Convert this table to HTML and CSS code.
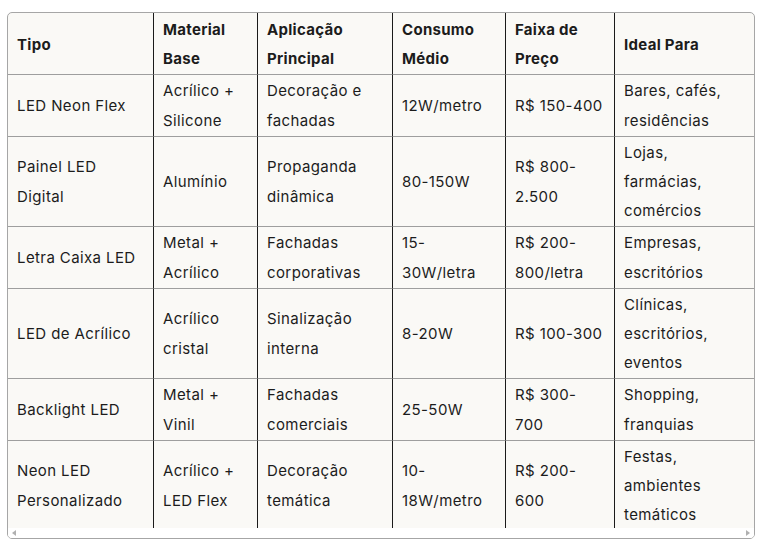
FILE: index.html
```html
<!DOCTYPE html>
<html lang="pt-BR">
<head>
<meta charset="utf-8">
<title>Tabela LED</title>
<link rel="stylesheet" href="styles.css">
</head>
<body>
<div class="frame">
  <div class="scroller">
    <table class="grid">
      <thead>
        <tr>
          <th class="c1">Tipo</th>
          <th class="c2">Material Base</th>
          <th class="c3">Aplicação Principal</th>
          <th class="c4">Consumo Médio</th>
          <th class="c5">Faixa de Preço</th>
          <th class="c6">Ideal Para</th>
        </tr>
      </thead>
      <tbody>
        <tr>
          <td>LED Neon Flex</td>
          <td>Acrílico + Silicone</td>
          <td>Decoração e fachadas</td>
          <td>12W/metro</td>
          <td>R$ 150-400</td>
          <td>Bares, cafés, residências</td>
        </tr>
        <tr>
          <td>Painel LED Digital</td>
          <td>Alumínio</td>
          <td>Propaganda dinâmica</td>
          <td>80-150W</td>
          <td>R$ 800-2.500</td>
          <td>Lojas, farmácias, comércios</td>
        </tr>
        <tr>
          <td>Letra Caixa LED</td>
          <td>Metal + Acrílico</td>
          <td>Fachadas corporativas</td>
          <td>15-30W/letra</td>
          <td>R$ 200-800/letra</td>
          <td>Empresas, escritórios</td>
        </tr>
        <tr>
          <td>LED de Acrílico</td>
          <td>Acrílico cristal</td>
          <td>Sinalização interna</td>
          <td>8-20W</td>
          <td>R$ 100-300</td>
          <td>Clínicas, escritórios, eventos</td>
        </tr>
        <tr>
          <td>Backlight LED</td>
          <td>Metal + Vinil</td>
          <td>Fachadas comerciais</td>
          <td>25-50W</td>
          <td>R$ 300-<br>700</td>
          <td>Shopping, franquias</td>
        </tr>
        <tr>
          <td>Neon LED Personalizado</td>
          <td>Acrílico + LED Flex</td>
          <td>Decoração temática</td>
          <td>10-18W/metro</td>
          <td>R$ 200-<br>600</td>
          <td>Festas, ambientes temáticos</td>
        </tr>
      </tbody>
    </table>
  </div>
  <div class="hbar">
    <span class="arrow arrow-left"></span>
    <span class="arrow arrow-right"></span>
  </div>
</div>
</body>
</html>
```
FILE: styles.css
```css
html, body {
  margin: 0;
  padding: 0;
  background: #ffffff;
}

body {
  font-family: "Inter", "Liberation Sans", sans-serif;
  color: #1c1c1c;
}

.frame {
  margin: 12px 0 0 7px;
  width: 748px;
  box-sizing: border-box;
  border: 1px solid #a6a6a6;
  border-radius: 5px;
  overflow: hidden;
  background: #faf9f6;
}

.scroller {
  height: 515px;
  overflow: hidden;
}

.grid {
  border-collapse: separate;
  border-spacing: 0;
  table-layout: fixed;
  width: 746px;
  font-size: 15px;
  line-height: 29.2px;
  letter-spacing: 0.4px;
}

.grid th,
.grid td {
  box-sizing: border-box;
  padding: 1px 8px 1px 9px;
  text-align: left;
  vertical-align: middle;
  border-right: 1px solid #1a1a1a;
  border-bottom: 1px solid #9e9e9e;
}

.grid th {
  padding-top: 2px;
  font-weight: 700;
  letter-spacing: 0.3px;
}

.grid th:last-child,
.grid td:last-child {
  border-right: none;
}

.c1 { width: 146px; }
.c2 { width: 104px; }
.c3 { width: 135px; }
.c4 { width: 113px; }
.c5 { width: 109px; }
.c6 { width: 139px; }

.hbar {
  position: relative;
  height: 10px;
  background: #ffffff;
}

.arrow {
  position: absolute;
  top: 2px;
  width: 0;
  height: 0;
  border-top: 3px solid transparent;
  border-bottom: 3px solid transparent;
}

.arrow-left {
  left: 4px;
  border-right: 4px solid #b0b0b0;
}

.arrow-right {
  right: 4px;
  border-left: 4px solid #b0b0b0;
}
```
